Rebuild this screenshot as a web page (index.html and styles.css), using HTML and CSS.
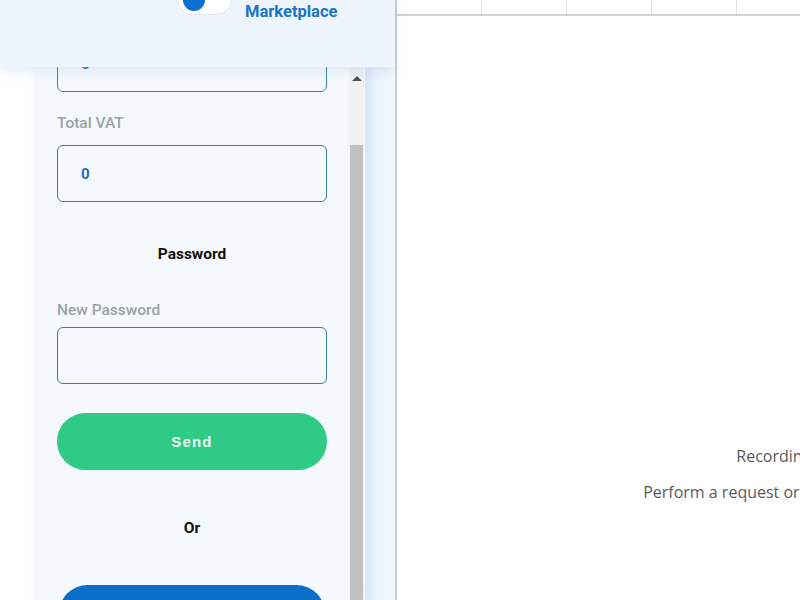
FILE: index.html
```html
<!DOCTYPE html>
<html>
<head>
<meta charset="utf-8">
<link rel="stylesheet" href="styles.css">
</head>
<body>
<div class="app">
  <aside class="side">
    <header class="top">
      <div class="toggle"><span class="knob"></span></div>
      <span class="brand">Marketplace</span>
    </header>
    <div class="row">
      <div class="gutter"></div>
      <div class="card">
        <div class="content">
          <div class="field first"><span class="val">0</span></div>
          <label class="lbl">Total VAT</label>
          <div class="field"><span class="val">0</span></div>
          <h3 class="section">Password</h3>
          <label class="lbl lbl2">New Password</label>
          <div class="field"></div>
          <button class="btn send">Send</button>
          <p class="or">Or</p>
          <button class="btn blue"></button>
        </div>
        <div class="scrollbar">
          <div class="arrow"></div>
          <div class="thumb"></div>
        </div>
      </div>
      <div class="fill"></div>
    </div>
  </aside>
  <main class="devtools">
    <div class="thead">
      <div class="th"></div><div class="th"></div><div class="th"></div><div class="th"></div><div class="th"></div><div class="th"></div>
    </div>
    <div class="empty">
      <p class="e1">Recording network activity…</p>
      <p class="e2">Perform a request or hit Ctrl + R to record the reload.</p>
    </div>
  </main>
</div>
</body>
</html>
```

FILE: styles.css
```css
html, body {
  margin: 0;
  padding: 0;
  width: 800px;
  height: 600px;
  overflow: hidden;
  background: #fff;
}
.app {
  display: flex;
  width: 800px;
  height: 600px;
}
.side {
  width: 395px;
  flex: none;
  display: flex;
  flex-direction: column;
  background: #fff;
  border-right: 2px solid #c9cdd2;
}
.top {
  height: 67px;
  flex: none;
  background: #eef5fc;
  box-shadow: 0 4px 10px rgba(150, 180, 220, 0.25);
  position: relative;
  z-index: 2;
  display: flex;
  align-items: flex-start;
  padding-left: 177px;
  box-sizing: border-box;
}
.toggle {
  width: 55px;
  height: 30px;
  margin-top: -15px;
  border-radius: 15px;
  background: #fff;
  border: 1px solid #dde6f0;
  box-sizing: border-box;
  display: flex;
  align-items: center;
  padding-left: 5px;
}
.knob {
  width: 22px;
  height: 22px;
  border-radius: 50%;
  background: #0b6fd0;
}
.brand {
  margin-left: 13px;
  margin-top: 2px;
  font-family: Roboto, sans-serif;
  font-weight: 700;
  font-size: 16.5px;
  color: #1b74c5;
  line-height: 20px;
}
.row {
  flex: 1;
  display: flex;
  min-height: 0;
}
.gutter {
  width: 34px;
  flex: none;
  background: #fff;
}
.card {
  width: 331px;
  flex: none;
  display: flex;
  background: #f5f9fd;
  box-shadow: 2px 0 10px rgba(120, 160, 220, 0.2);
  border-radius: 0 8px 0 0;
  overflow: hidden;
  position: relative;
  z-index: 1;
}
.content {
  flex: 1;
  padding: 0 22px 0 23px;
  margin-top: -32px;
  display: flex;
  flex-direction: column;
  font-family: Roboto, sans-serif;
}
.field {
  height: 57px;
  flex: none;
  border: 1.5px solid #3d7ea8;
  border-radius: 6px;
  box-sizing: border-box;
  display: flex;
  align-items: center;
  padding-left: 23px;
}
.val {
  color: #1f6fb8;
  font-weight: 700;
  font-size: 15px;
}
.lbl {
  display: block;
  margin: 22px 0 13px;
  line-height: 18px;
  font-size: 15.5px;
  font-weight: 500;
  color: #9ba1a8;
}
.section {
  margin: 42px 0 30px;
  text-align: center;
  font-size: 15.5px;
  line-height: 20px;
  font-weight: 700;
  color: #111;
}
.lbl2 {
  margin-top: 7px;
  margin-bottom: 8px;
}
.btn {
  flex: none;
  height: 57px;
  border: none;
  border-radius: 29px;
  width: 100%;
}
.send {
  margin-top: 29px;
  background: #2fca86;
  color: #eefaf4;
  font-family: "Liberation Sans", Arial, sans-serif;
  font-weight: 700;
  font-size: 15px;
  letter-spacing: 1.2px;
}
.or {
  margin: 47px 0 0;
  text-align: center;
  font-size: 15.5px;
  font-weight: 700;
  line-height: 22px;
  color: #111;
}
.blue {
  margin-top: 46px;
  width: 266px;
  align-self: center;
  background: #0a6fc8;
}
.scrollbar {
  width: 15px;
  flex: none;
  margin-right: 1px;
  background: #f1f1f1;
  display: flex;
  flex-direction: column;
  align-items: center;
}
.arrow {
  margin-top: 9px;
  width: 0;
  height: 0;
  border-left: 5px solid transparent;
  border-right: 5px solid transparent;
  border-bottom: 5px solid #505050;
}
.thumb {
  margin-top: 64px;
  width: 13px;
  flex: 1;
  background: #c1c1c1;
}
.fill {
  flex: 1;
  background: linear-gradient(90deg, #e2eefb, #f4f8fd);
}
.devtools {
  flex: none;
  width: 888px;
  height: 600px;
  background: #fff;
  display: flex;
  flex-direction: column;
}
.thead {
  height: 14px;
  flex: none;
  display: flex;
  border-bottom: 2px solid #cfd2d6;
}
.th {
  width: 84px;
  flex: none;
  border-right: 1px solid #e1e3e6;
}
.empty {
  margin-top: 429px;
  text-align: center;
  font-family: "Open Sans", "DejaVu Sans", sans-serif;
  font-size: 16px;
  color: #5a5a5a;
}
.e1 {
  margin: 0;
  line-height: 22px;
}
.e2 {
  margin: 14px 0 0;
  line-height: 22px;
}
```
